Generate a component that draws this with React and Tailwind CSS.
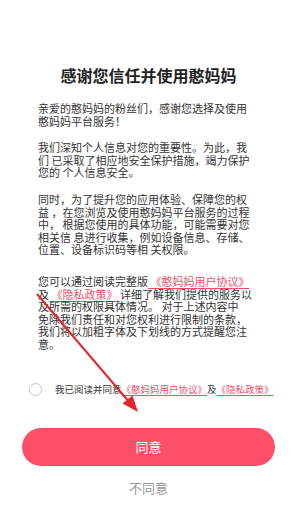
const lines1 = ["亲爱的憨妈妈的粉丝们，感谢您选择及使用", "憨妈妈平台服务！"];
const lines2 = [
  "我们深知个人信息对您的重要性。为此，我",
  "们 已采取了相应地安全保护措施，竭力保护",
  "您的 个人信息安全。",
];
const lines3 = [
  "同时，为了提升您的应用体验、保障您的权",
  "益 ，在您浏览及使用憨妈妈平台服务的过程",
  "中， 根据您使用的具体功能，可能需要对您",
  "相关信 息进行收集，例如设备信息、存储、",
  "位置、设备标识码等相 关权限。",
];

const Link = ({ children }) => (
  <span className="text-[#e9506b] underline decoration-[#e9506b] underline-offset-2">{children}</span>
);

const Para = ({ lines, className = "" }) => (
  <div className={className}>
    {lines.map((l, i) => (
      <div key={i} className="whitespace-pre">
        {l}
      </div>
    ))}
  </div>
);

export default function App() {
  return (
    <div className="relative w-[297px] h-[528px] overflow-hidden bg-white font-['Noto_Sans_CJK_SC',sans-serif] text-[#333]">
      <h1 className="pt-[65px] text-center text-[16px] leading-[20px] font-bold text-[#222]">
        感谢您信任并使用憨妈妈
      </h1>

      <div className="mt-[17px] px-[38px] text-[11px] leading-[12.6px]">
        <Para lines={lines1} />
        <Para lines={lines2} className="mt-[14px]" />
        <Para lines={lines3} className="mt-[14px]" />
        <div className="mt-[19px]">
          <div className="whitespace-pre">
            您可以通过阅读完整版<Link> 《憨妈妈用户协议》</Link>
          </div>
          <div className="whitespace-pre">
            及<Link> 《隐私政策》 </Link>详细了解我们提供的服务以
          </div>
          <div className="whitespace-pre">及所需的权限具体情况。 对于上述内容中</div>
          <div className="whitespace-pre">免除我们责任和对您权利进行限制的条款，</div>
          <div className="whitespace-pre">我们将以加粗字体及下划线的方式提醒您注</div>
          <div className="whitespace-pre">意。</div>
        </div>
      </div>

      <div className="mt-[32px] flex items-center pl-[29px]">
        <span className="h-[13px] w-[13px] rounded-full border border-[#c4c4c4]" />
        <span className="ml-[13px] whitespace-pre text-[9.5px] leading-[12px]">
          我已阅读并同意<Link>《憨妈妈用户协议》</Link>及<Link>《隐私政策》</Link>
        </span>
      </div>

      <div className="mx-[22px] mt-[32px] flex h-[38px] items-center justify-center rounded-full bg-[#fd4f68] text-[13px] text-white">
        同意
      </div>
      <div className="mt-[12px] text-center text-[13px] leading-[20px] text-[#999]">不同意</div>

      <svg className="absolute left-0 top-0 pointer-events-none" width="297" height="528" viewBox="0 0 297 528">
        <line x1="37" y1="294" x2="130" y2="403" stroke="#e3262b" strokeWidth="2" />
        <polygon points="138,412 122.5,403.5 132.5,395.5" fill="#e3262b" />
      </svg>
    </div>
  );
}
